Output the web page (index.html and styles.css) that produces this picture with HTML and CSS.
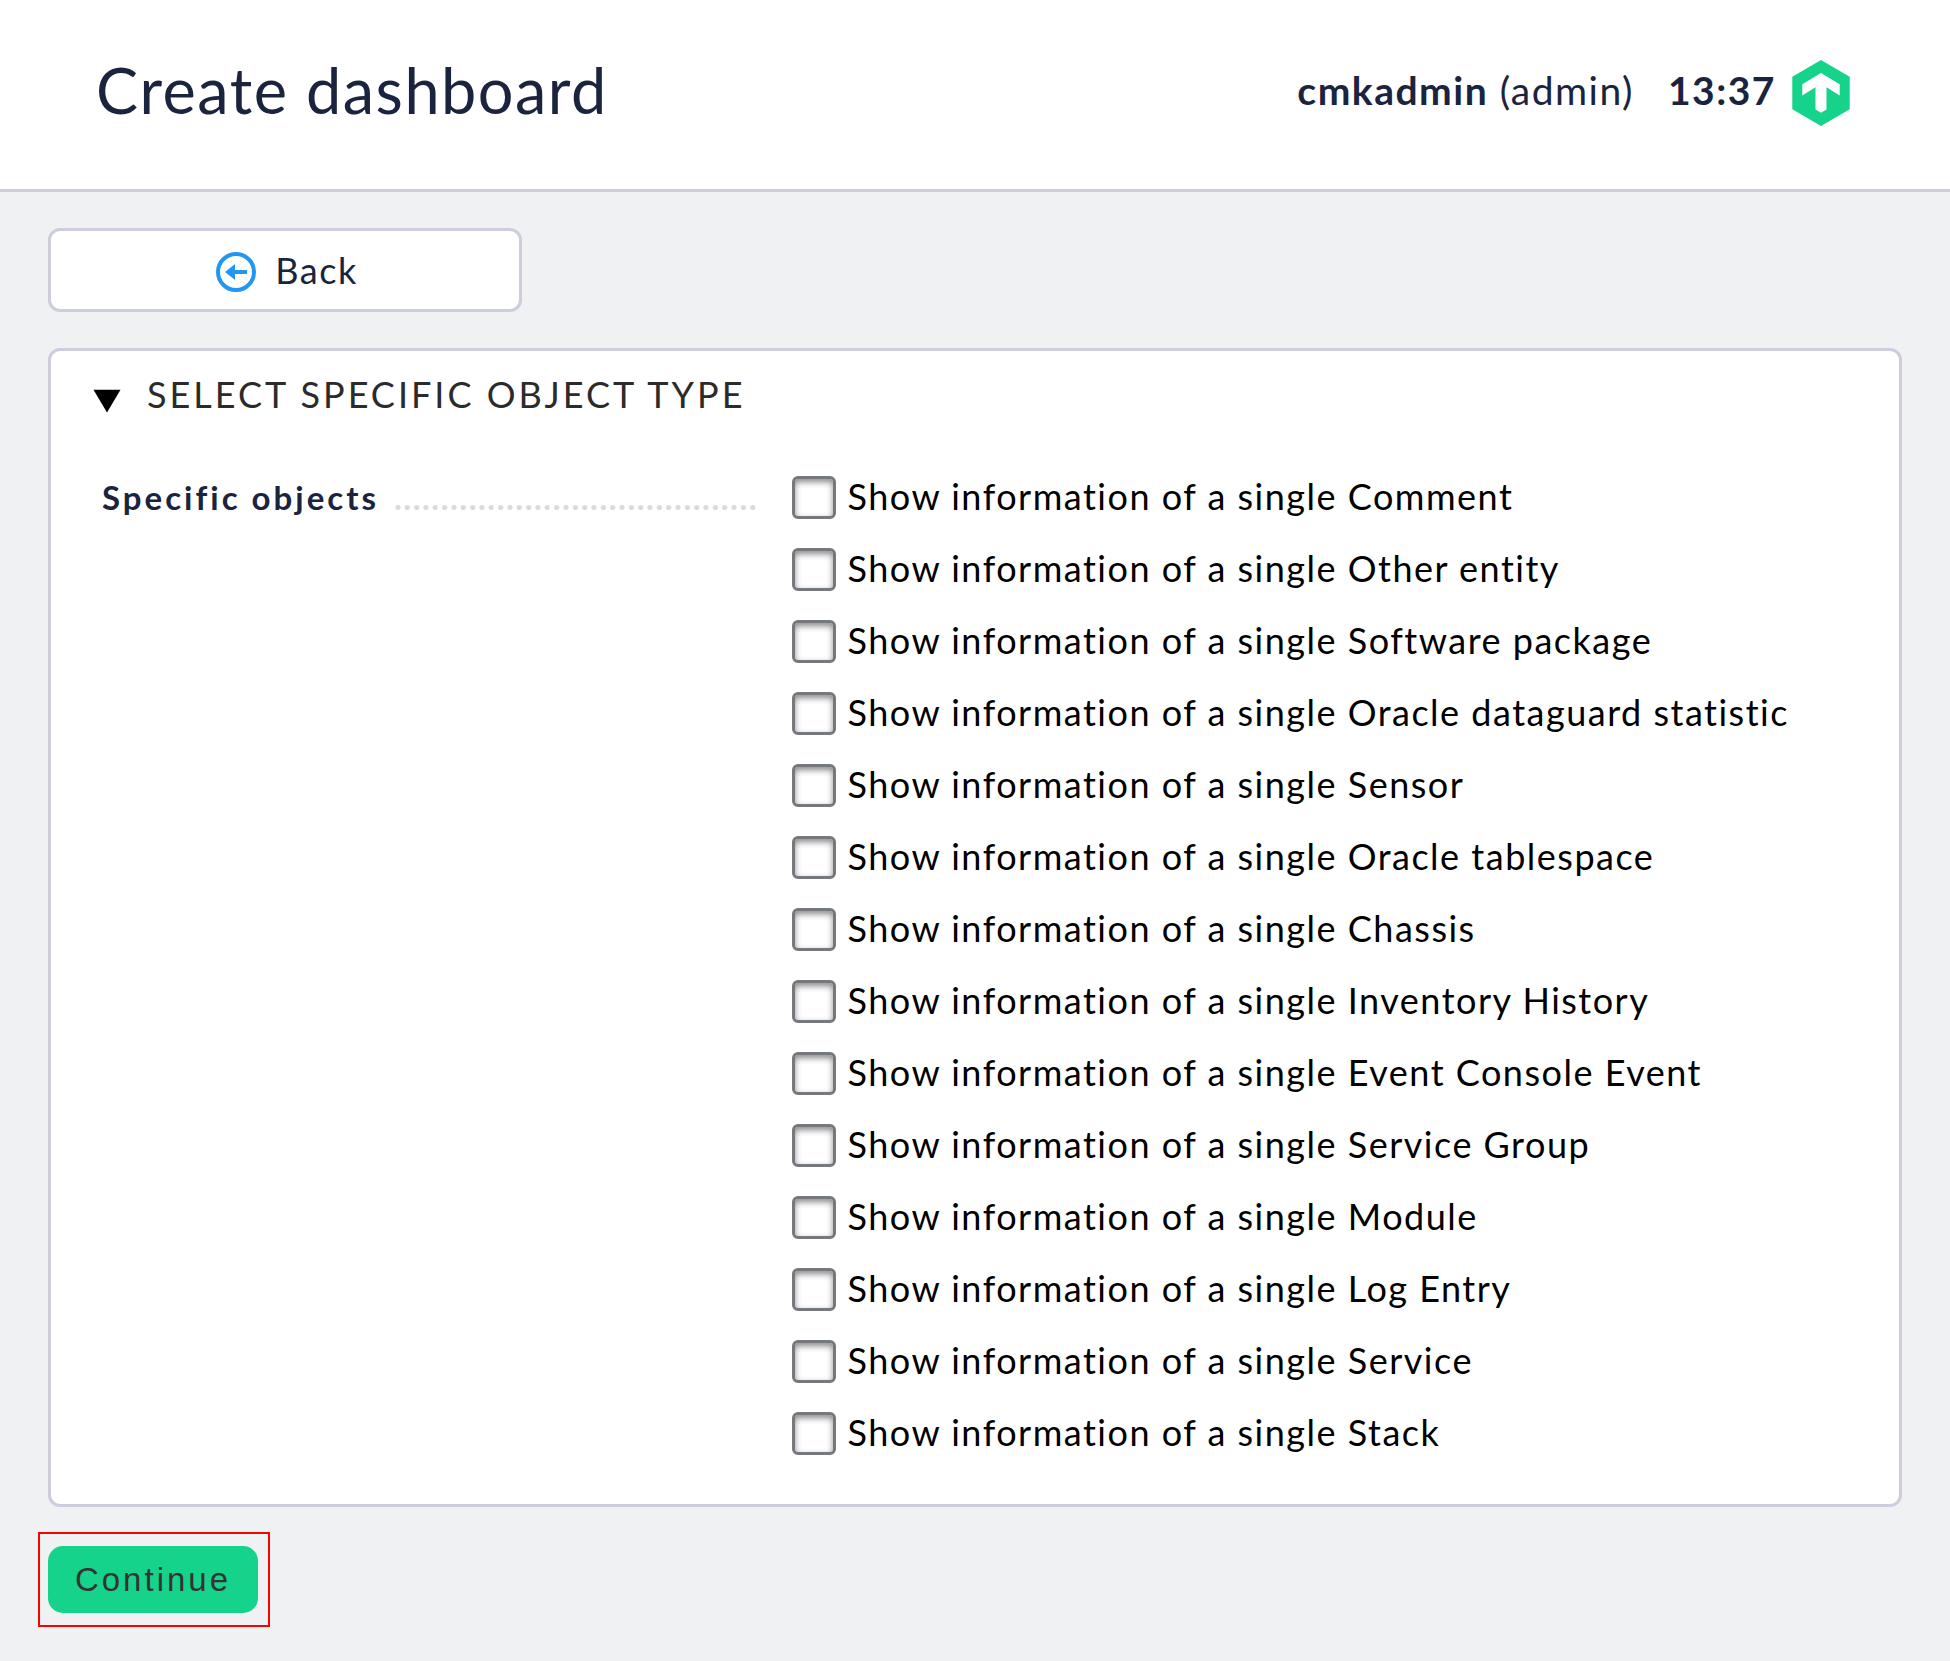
FILE: index.html
```html
<!DOCTYPE html>
<html lang="en">
<head>
<meta charset="utf-8">
<title>Create dashboard</title>
<link rel="stylesheet" href="styles.css">
</head>
<body>
<header class="header">
  <h1 class="title">Create dashboard</h1>
  <div class="user"><b>cmkadmin</b> (admin)</div>
  <div class="time">13:37</div>
  <svg class="logo" width="58" height="66" viewBox="0 0 58 66">
    <path fill="#15d38a" d="M29 0 57.700 16.700V49.300L29 66 .3 49.300V16.700Z"/>
    <path fill="#fff" d="M29 13 47.700 24.300V35.500L34.500 27.300V49.500L29 52.700 23.500 49.500V27.300L10.300 35.500V24.300Z"/>
  </svg>
</header>
<main class="content">
  <a class="back">
    <svg class="back-icon" width="40" height="40" viewBox="0 0 40 40">
      <circle cx="20" cy="20" r="18" fill="none" stroke="#2196f3" stroke-width="4"/>
      <path fill="#2196f3" d="M9 20 19 12V18H31V22H19V28Z"/>
    </svg>
    <span>Back</span>
  </a>
  <section class="panel">
    <div class="panel-head">
      <svg class="fold" width="28" height="24" viewBox="0 0 28 24"><path d="M.5 .7H27.500L14 23.500Z"/></svg>
      <h2 class="panel-title">Select specific object type</h2>
    </div>
    <div class="form">
      <div class="legend"><span class="legend-text">Specific objects</span><span class="dots">.......................................</span></div>
      <div class="options">
        <label class="option"><input type="checkbox" class="check">Show information of a single Comment</label>
        <label class="option"><input type="checkbox" class="check">Show information of a single Other entity</label>
        <label class="option"><input type="checkbox" class="check">Show information of a single Software package</label>
        <label class="option"><input type="checkbox" class="check">Show information of a single Oracle dataguard statistic</label>
        <label class="option"><input type="checkbox" class="check">Show information of a single Sensor</label>
        <label class="option"><input type="checkbox" class="check">Show information of a single Oracle tablespace</label>
        <label class="option"><input type="checkbox" class="check">Show information of a single Chassis</label>
        <label class="option"><input type="checkbox" class="check">Show information of a single Inventory History</label>
        <label class="option"><input type="checkbox" class="check">Show information of a single Event Console Event</label>
        <label class="option"><input type="checkbox" class="check">Show information of a single Service Group</label>
        <label class="option"><input type="checkbox" class="check">Show information of a single Module</label>
        <label class="option"><input type="checkbox" class="check">Show information of a single Log Entry</label>
        <label class="option"><input type="checkbox" class="check">Show information of a single Service</label>
        <label class="option"><input type="checkbox" class="check">Show information of a single Stack</label>
      </div>
    </div>
  </section>
  <div class="highlight"><button class="continue">Continue</button></div>
</main>
</body>
</html>
```
FILE: styles.css
```css
* { box-sizing: border-box; }
body {
  margin: 0;
  min-height: 1661px;
  background: #f0f1f3;
  color: #000;
  font: 36px/72px Lato, sans-serif;
  letter-spacing: 1.5px;
}
.header {
  display: flex;
  align-items: center;
  height: 192px;
  padding: 0 100px 9px 96px;
  border-bottom: 3px solid #cdcddb;
  background: #fff;
  color: #1a243e;
  font-size: 39px;
}
.title {
  flex: 1;
  margin: 0;
  font-size: 63px;
  font-weight: 400;
}
.user { margin-right: 34px; }
.time { margin-right: 16px; font-weight: 700; }
.logo { margin-top: 6px; }
.content { padding: 36px 48px 0; }
.back {
  display: flex;
  align-items: center;
  justify-content: center;
  gap: 19px;
  width: 474px;
  height: 84px;
  padding-left: 4px;
  border: 3px solid #cdcddb;
  border-radius: 12px;
  background: #fff;
  color: #1a243e;
}
.back-icon { margin-top: 4px; }
.panel {
  margin-top: 36px;
  padding: 13px 0 36px;
  border: 3px solid #cdcddb;
  border-radius: 12px;
  background: #fff;
}
.panel-head {
  display: flex;
  align-items: center;
  gap: 26px;
  height: 60px;
  padding-left: 42px;
}
.fold { margin-top: 14px; }
.panel-title {
  margin: 0;
  color: #2b2b2b;
  font-size: 36px;
  font-weight: 400;
  letter-spacing: 3px;
  text-transform: uppercase;
}
.form {
  display: grid;
  grid-template-columns: 689px 1fr;
  margin-top: 36px;
  padding-left: 51px;
}
.legend {
  display: flex;
  gap: 15px;
  padding-top: 1px;
  font-size: 33px;
  font-weight: 700;
}
.legend-text { color: #1a243e; letter-spacing: 3px; }
.dots { color: #dadada; }
.option {
  display: flex;
  align-items: center;
  gap: 11.5px;
  height: 72px;
}
.check {
  appearance: none;
  width: 44px;
  height: 43px;
  margin: 3px 0 0 1px;
  border: 3px solid #75787d;
  border-radius: 6px;
  background: #fff;
  box-shadow: inset 0 3px 6px #888;
}
.highlight {
  display: flex;
  width: 232px;
  height: 95px;
  margin: 25px 0 0 -10px;
  padding: 12px 8px;
  border: 2px solid #f00;
}
.continue {
  width: 210px;
  height: 67px;
  padding: 0;
  border: 0;
  border-radius: 15px;
  background: #15d38a;
  color: #333;
  font: 33px "Liberation Sans", sans-serif;
  letter-spacing: 3px;
}
```
